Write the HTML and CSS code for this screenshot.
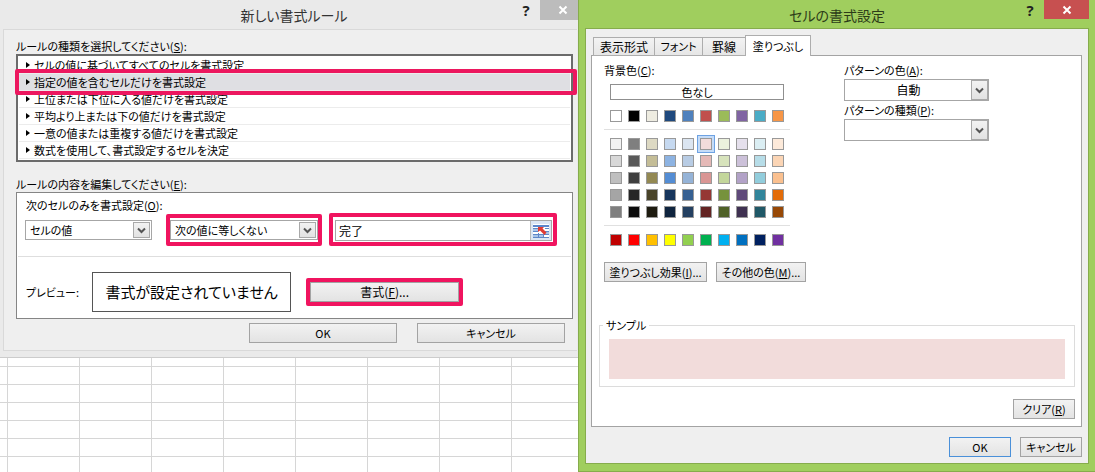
FILE: index.html
```html
<!DOCTYPE html>
<html lang="ja">
<head>
<meta charset="utf-8">
<title>新しい書式ルール</title>
<link rel="stylesheet" href="styles.css">
</head>
<body>
<main class="desktop">
  <div class="left">
    <section class="dialog rule">
      <header class="titlebar">
        <h1 class="title">新しい書式ルール</h1>
        <div class="window-buttons">
          <button class="help" type="button">?</button>
          <button class="close" type="button" aria-label="閉じる"><svg viewBox="0 0 10 10"><path d="M1.500 1.500 8.500 8.500M8.500 1.500 1.500 8.500"/></svg></button>
        </div>
      </header>
      <form class="rule-body">
        <p class="caption">ルールの種類を選択してください(<u>S</u>):</p>
        <div class="rule-list">
          <label class="rule-row"><input type="radio" name="kind"><span>セルの値に基づいてすべてのセルを書式設定</span></label>
          <label class="rule-row picked"><input type="radio" name="kind" checked><span>指定の値を含むセルだけを書式設定</span></label>
          <label class="rule-row"><input type="radio" name="kind"><span>上位または下位に入る値だけを書式設定</span></label>
          <label class="rule-row"><input type="radio" name="kind"><span>平均より上または下の値だけを書式設定</span></label>
          <label class="rule-row"><input type="radio" name="kind"><span>一意の値または重複する値だけを書式設定</span></label>
          <label class="rule-row"><input type="radio" name="kind"><span>数式を使用して、書式設定するセルを決定</span></label>
        </div>
        <p class="caption second">ルールの内容を編集してください(<u>E</u>):</p>
        <div class="editor">
          <label class="caption" for="target">次のセルのみを書式設定(<u>O</u>):</label>
          <div class="condition">
            <div class="combo target">
              <select id="target"><option>セルの値</option></select>
              <span class="arrow"><svg viewBox="0 0 9 7"><path d="M1 1.500 4.500 5 8 1.500"/></svg></span>
            </div>
            <div class="mark operator">
              <div class="combo">
                <select aria-label="条件"><option>次の値に等しくない</option></select>
                <span class="arrow"><svg viewBox="0 0 9 7"><path d="M1 1.500 4.500 5 8 1.500"/></svg></span>
              </div>
            </div>
            <div class="mark operand">
              <div class="ref-box">
                <input type="text" value="完了" aria-label="値">
                <button type="button" aria-label="セル範囲の選択">
                  <svg viewBox="0 0 16 14">
                    <path fill="#fff" d="M0 0h16v14H0z"/>
                    <path fill="#5b86cc" d="M0 1h16v2H0z"/>
                    <path fill="#a9c4e8" d="M0 5h5v2H0zM0 11h5v2H0zM12 8h4v2h-4zM6 11h4v2H6z"/>
                    <path fill="none" stroke="#5f87c8" d="M0 4.500h5M12 4.500h4M0 7.500h5M12 7.500h4M0 10.500h16M0 13.500h16M5.500 9v5M10.500 11v3"/>
                    <path fill="#e03a34" d="M5 3h6L9.500 4.500l4 4-2 2.500-4.500-4.500L5 8z"/>
                  </svg>
                </button>
              </div>
            </div>
          </div>
          <div class="preview-row">
            <span class="preview-label">プレビュー:</span>
            <output class="preview">書式が設定されていません</output>
            <div class="mark format"><button class="button" type="button">書式(<u>F</u>)...</button></div>
          </div>
        </div>
        <footer class="rule-actions">
          <button class="button" type="button">OK</button>
          <button class="button" type="button">キャンセル</button>
        </footer>
      </form>
    </section>
    <div class="sheet"></div>
  </div>

  <section class="dialog cells">
    <header class="titlebar">
      <h2 class="title">セルの書式設定</h2>
      <div class="window-buttons">
        <button class="help" type="button">?</button>
        <button class="close" type="button" aria-label="閉じる"><svg viewBox="0 0 10 10"><path d="M1.500 1.500 8.500 8.500M8.500 1.500 1.500 8.500"/></svg></button>
      </div>
    </header>
    <form class="cells-body">
      <nav class="tabs" role="tablist">
        <button class="tab number" type="button" role="tab">表示形式</button>
        <button class="tab font" type="button" role="tab">フォント</button>
        <button class="tab border" type="button" role="tab">罫線</button>
        <button class="tab active" type="button" role="tab" aria-selected="true">塗りつぶし</button>
      </nav>
      <div class="panel">
        <div class="fill-options">
          <div class="colors">
            <p class="caption">背景色(<u>C</u>):</p>
            <button class="no-color" type="button">色なし</button>
            <div class="swatches theme">
              <input type="radio" name="bg" aria-label="白" style="--c:#ffffff"><input type="radio" name="bg" aria-label="黒" style="--c:#000000"><input type="radio" name="bg" aria-label="薄茶" style="--c:#eeece1"><input type="radio" name="bg" aria-label="紺" style="--c:#1f497d"><input type="radio" name="bg" aria-label="青" style="--c:#4f81bd"><input type="radio" name="bg" aria-label="赤" style="--c:#c0504d"><input type="radio" name="bg" aria-label="緑" style="--c:#9bbb59"><input type="radio" name="bg" aria-label="紫" style="--c:#8064a2"><input type="radio" name="bg" aria-label="水色" style="--c:#4bacc6"><input type="radio" name="bg" aria-label="橙" style="--c:#f79646">
            </div>
            <hr>
            <div class="swatches shades">
              <input type="radio" name="bg" aria-label="白 1" style="--c:#f2f2f2"><input type="radio" name="bg" aria-label="黒 1" style="--c:#7f7f7f"><input type="radio" name="bg" aria-label="薄茶 1" style="--c:#ddd9c3"><input type="radio" name="bg" aria-label="紺 1" style="--c:#c6d9f0"><input type="radio" name="bg" aria-label="青 1" style="--c:#dbe5f1"><input type="radio" name="bg" aria-label="赤 1" style="--c:#f2dcdb" checked><input type="radio" name="bg" aria-label="緑 1" style="--c:#ebf1dd"><input type="radio" name="bg" aria-label="紫 1" style="--c:#e5e0ec"><input type="radio" name="bg" aria-label="水色 1" style="--c:#dbeef3"><input type="radio" name="bg" aria-label="橙 1" style="--c:#fdeada">
              <input type="radio" name="bg" aria-label="白 2" style="--c:#d8d8d8"><input type="radio" name="bg" aria-label="黒 2" style="--c:#595959"><input type="radio" name="bg" aria-label="薄茶 2" style="--c:#c4bd97"><input type="radio" name="bg" aria-label="紺 2" style="--c:#8db3e2"><input type="radio" name="bg" aria-label="青 2" style="--c:#b8cce4"><input type="radio" name="bg" aria-label="赤 2" style="--c:#e5b9b7"><input type="radio" name="bg" aria-label="緑 2" style="--c:#d7e3bc"><input type="radio" name="bg" aria-label="紫 2" style="--c:#ccc1d9"><input type="radio" name="bg" aria-label="水色 2" style="--c:#b7dde8"><input type="radio" name="bg" aria-label="橙 2" style="--c:#fbd5b5">
              <input type="radio" name="bg" aria-label="白 3" style="--c:#bfbfbf"><input type="radio" name="bg" aria-label="黒 3" style="--c:#3f3f3f"><input type="radio" name="bg" aria-label="薄茶 3" style="--c:#938953"><input type="radio" name="bg" aria-label="紺 3" style="--c:#548dd4"><input type="radio" name="bg" aria-label="青 3" style="--c:#95b3d7"><input type="radio" name="bg" aria-label="赤 3" style="--c:#d99694"><input type="radio" name="bg" aria-label="緑 3" style="--c:#c3d69b"><input type="radio" name="bg" aria-label="紫 3" style="--c:#b2a2c7"><input type="radio" name="bg" aria-label="水色 3" style="--c:#92cddc"><input type="radio" name="bg" aria-label="橙 3" style="--c:#fac08f">
              <input type="radio" name="bg" aria-label="白 4" style="--c:#a5a5a5"><input type="radio" name="bg" aria-label="黒 4" style="--c:#262626"><input type="radio" name="bg" aria-label="薄茶 4" style="--c:#494429"><input type="radio" name="bg" aria-label="紺 4" style="--c:#17365d"><input type="radio" name="bg" aria-label="青 4" style="--c:#366092"><input type="radio" name="bg" aria-label="赤 4" style="--c:#953734"><input type="radio" name="bg" aria-label="緑 4" style="--c:#76923c"><input type="radio" name="bg" aria-label="紫 4" style="--c:#5f497a"><input type="radio" name="bg" aria-label="水色 4" style="--c:#31859b"><input type="radio" name="bg" aria-label="橙 4" style="--c:#e36c09">
              <input type="radio" name="bg" aria-label="白 5" style="--c:#7f7f7f"><input type="radio" name="bg" aria-label="黒 5" style="--c:#0c0c0c"><input type="radio" name="bg" aria-label="薄茶 5" style="--c:#1d1b10"><input type="radio" name="bg" aria-label="紺 5" style="--c:#0f243e"><input type="radio" name="bg" aria-label="青 5" style="--c:#244061"><input type="radio" name="bg" aria-label="赤 5" style="--c:#632423"><input type="radio" name="bg" aria-label="緑 5" style="--c:#4f6128"><input type="radio" name="bg" aria-label="紫 5" style="--c:#3f3151"><input type="radio" name="bg" aria-label="水色 5" style="--c:#205867"><input type="radio" name="bg" aria-label="橙 5" style="--c:#974806">
            </div>
            <hr>
            <div class="swatches standard">
              <input type="radio" name="bg" aria-label="濃い赤" style="--c:#c00000"><input type="radio" name="bg" aria-label="標準の赤" style="--c:#ff0000"><input type="radio" name="bg" aria-label="オレンジ" style="--c:#ffc000"><input type="radio" name="bg" aria-label="黄" style="--c:#ffff00"><input type="radio" name="bg" aria-label="薄い緑" style="--c:#92d050"><input type="radio" name="bg" aria-label="標準の緑" style="--c:#00b050"><input type="radio" name="bg" aria-label="薄い青" style="--c:#00b0f0"><input type="radio" name="bg" aria-label="標準の青" style="--c:#0070c0"><input type="radio" name="bg" aria-label="濃い青" style="--c:#002060"><input type="radio" name="bg" aria-label="標準の紫" style="--c:#7030a0">
            </div>
            <div class="more">
              <button class="button effects" type="button">塗りつぶし効果(<u>I</u>)...</button>
              <button class="button others" type="button">その他の色(<u>M</u>)...</button>
            </div>
          </div>
          <div class="pattern">
            <label class="caption" for="pcolor">パターンの色(<u>A</u>):</label>
            <div class="combo">
              <select id="pcolor" class="centered"><option>自動</option></select>
              <span class="arrow"><svg viewBox="0 0 9 7"><path d="M1 1.500 4.500 5 8 1.500"/></svg></span>
            </div>
            <label class="caption" for="pkind">パターンの種類(<u>P</u>):</label>
            <div class="combo">
              <select id="pkind"><option></option></select>
              <span class="arrow"><svg viewBox="0 0 9 7"><path d="M1 1.500 4.500 5 8 1.500"/></svg></span>
            </div>
          </div>
        </div>
        <fieldset class="sample">
          <legend>サンプル</legend>
          <div class="sample-fill"></div>
        </fieldset>
        <div class="clear-row"><button class="button" type="button">クリア(<u>R</u>)</button></div>
      </div>
      <footer class="cells-actions">
        <button class="button primary" type="button">OK</button>
        <button class="button" type="button">キャンセル</button>
      </footer>
    </form>
  </section>
</main>
</body>
</html>
```
FILE: styles.css
```css
*, *::after { box-sizing: border-box; }

body {
  margin: 0;
  color: #000;
  background: #fff;
  font: 11px/16px "Noto Sans CJK JP", "Liberation Sans", sans-serif;
  font-feature-settings: "palt";
}

button, input, select {
  margin: 0;
  padding: 0;
  color: inherit;
  font: inherit;
  font-feature-settings: inherit;
  border-radius: 0;
}

p, h1, h2 { margin: 0; }
u { text-underline-offset: 1px; }
svg { display: block; }

.desktop { display: grid; grid-template-columns: 578fr 517fr; min-height: 100vh; }
.left { min-width: 0; display: flex; flex-direction: column; }
.caption { display: block; white-space: nowrap; }

/* Window frame */
.titlebar { position: relative; display: flex; justify-content: center; }
.title { color: #333; font-size: 14px; font-weight: 400; line-height: 28px; padding-top: 1px; }
.window-buttons { position: absolute; top: 0; right: 0; display: flex; align-items: flex-start; }
.help { border: 0; background: none; color: #222; font: 700 15px/20px "Open Sans", sans-serif; width: 28px; }
.close { display: flex; align-items: center; justify-content: center; border: 0; height: 20px; }
.close svg { width: 10px; height: 10px; fill: none; stroke: #fff; stroke-width: 2; }

.button {
  height: 20px;
  border: 1px solid #a3a3a3;
  background: linear-gradient(#f2f2f2, #e3e3e3);
  line-height: 18px;
  white-space: nowrap;
}
.button.primary { border-color: #4a90d9; }

.combo { position: relative; height: 20px; }
.combo select {
  appearance: none;
  display: block;
  width: 100%;
  height: 100%;
  padding: 0 22px 0 4px;
  border: 1px solid #a6a6a6;
  background: #fff;
}
.arrow {
  position: absolute;
  top: 2px;
  right: 2px;
  bottom: 2px;
  width: 17px;
  display: flex;
  align-items: center;
  justify-content: center;
  border: 1px solid #a9a9a9;
  background: linear-gradient(#f2f2f2, #e2e2e2);
  pointer-events: none;
}
.arrow svg { width: 9px; height: 7px; fill: none; stroke: #555; stroke-width: 2; }

/* Rule dialog */
.rule { background: #eaeaea; padding: 0 1px 6px 3px; border-bottom: 1px solid #ccc; }
.rule .titlebar { margin-left: 8px; }
.rule .close { width: 38px; background: #bcbcbc; padding-left: 8px; margin-right: -1px; }
.rule-body { padding: 8px 4px 7px 12px; border: 1px solid #d9d9d9; border-right: 0; background: #efefef; }
.rule-list { position: relative; padding: 1px; border: 2px solid #6b6b6b; background: #fff; }
.rule-row { display: flex; align-items: center; gap: 4px; height: 17px; padding-left: 7px; border-bottom: 1px solid #ececec; white-space: nowrap; }
.rule-row input { appearance: none; width: 4px; height: 6px; background: #000; clip-path: polygon(0 0, 100% 50%, 0 100%); }
.rule-row.picked { background: #dfdfe3; }
.rule-row.picked::after {
  content: "";
  position: absolute;
  top: 13px;
  left: -3px;
  right: -6px;
  height: 26px;
  border: 4px solid #ec175f;
  border-radius: 2px;
}
.caption.second { padding-top: 14px; }
.editor { border: 1px solid #858585; background: #fff; padding: 4px 1px 6px; }
.editor > .caption { padding-left: 8px; }
.condition { display: grid; grid-template-columns: 141fr 163fr 228fr; align-items: end; padding: 0 14px 10px 7px; border-bottom: 1px solid #dedede; }
.mark { border: 4px solid #f0145f; border-radius: 2px; background: #fff; }
.target { margin: 0 14px 6px 0; }
.operator { margin-right: 7px; padding: 2px 0; }
.operand { padding: 3px 1px 1px 2px; }
.ref-box { display: flex; height: 21px; border: 1px solid #a6a6a6; }
.ref-box input { flex: 1; min-width: 0; padding-left: 3px; border: 0; background: #fff; font-size: 12px; }
.ref-box button { width: 21px; display: flex; align-items: center; justify-content: center; border: 1px solid #bbb; border-width: 0 0 0 1px; background: #dce6f4; }
.ref-box svg { width: 16px; height: 14px; }
.preview-row { display: grid; grid-template-columns: 66fr 215fr 157fr; align-items: center; padding: 15px 108px 0 8px; }
.preview-label { white-space: nowrap; }
.preview { height: 40px; margin-right: 15px; border: 1px solid #555; font-size: 15px; line-height: 37px; text-align: center; white-space: nowrap; }
.format .button { display: block; width: 100%; font-size: 12px; }
.rule-actions { display: flex; justify-content: flex-end; gap: 20px; padding: 4px 8px 0 0; }
.rule-actions .button { width: 148px; }

/* Worksheet below the dialog */
.sheet {
  flex: 1;
  background-image: linear-gradient(90deg, #d6d6d6 1px, transparent 1px), linear-gradient(#d6d6d6 1px, transparent 1px);
  background-size: 72px 18px;
  background-position: 7px 8px;
}

/* Cell format dialog */
.cells { min-width: 0; display: flex; flex-direction: column; padding: 0 6px 7px; background: #a0ce5e; border-left: 1px solid #86ac4c; border-bottom: 1px solid #86ac4c; }
.cells .titlebar { margin-bottom: -1px; }
.cells .title { color: #2c3c18; }
.cells .close { width: 45px; height: 19px; background: #c75050; }
.cells-body { flex: 1; padding: 6px 6px 6px 5px; border: 1px solid #86ac4c; background: #efefef; }
.tabs { display: flex; align-items: flex-end; padding-left: 2px; margin-bottom: -1px; position: relative; }
.tab { height: 19px; border: 1px solid #adadad; border-right-width: 0; background: linear-gradient(#f3f3f3, #e6e6e6); line-height: 17px; white-space: nowrap; }
.tab.number { width: 61px; font-size: 12px; }
.tab.font { width: 48px; }
.tab.border { width: 43px; font-size: 12px; }
.tab.active { width: 66px; height: 21px; border-right-width: 1px; border-bottom: 0; background: #fff; }
.panel { padding: 6px 6px 7px 7px; border: 1px solid #a3a3a3; background: #fff; }
.fill-options { display: flex; }
.colors { width: 203px; padding-left: 5px; }
.no-color { display: block; width: 174px; height: 16px; margin: 6px 0 10px 6px; border: 1px solid #8f8f8f; background: #fff; line-height: 14px; }
.swatches { display: grid; grid-template-columns: repeat(10, 12px); gap: 5px 6px; padding-left: 6px; }
.swatches input { appearance: none; width: 12px; height: 12px; border: 1px solid #999; background: var(--c); }
.swatches input:checked { box-shadow: 0 0 0 2px #c5dcf8, 0 0 0 3px #6ea2e2; }
hr { width: 186px; height: 1px; margin: 7px 0 8px; border: 0; background: #e0e0e0; }
.more { display: flex; gap: 9px; margin-top: 16px; }
.effects { flex: none; width: 103px; }
.others { flex: none; width: 90px; }
.pattern { width: 145px; margin-left: 42px; }
.pattern .combo { height: 22px; margin: 1px 0; }
.pattern .arrow { top: 1px; right: 1px; bottom: 1px; }
.pattern .centered { padding: 0 16px 0 0; font-size: 12px; text-align: center; text-align-last: center; }
.sample { margin: 35px 0 0; padding: 6px 9px 7px; border: 1px solid #dcdcdc; }
.sample legend { padding: 0 3px; margin-left: -6px; }
.sample-fill { height: 40px; background: #f2dcdb; }
.clear-row { display: flex; justify-content: flex-end; padding-top: 12px; }
.clear-row .button, .cells-actions .button { width: 62px; }
.cells-actions { display: flex; justify-content: flex-end; gap: 9px; padding-top: 10px; }
```
